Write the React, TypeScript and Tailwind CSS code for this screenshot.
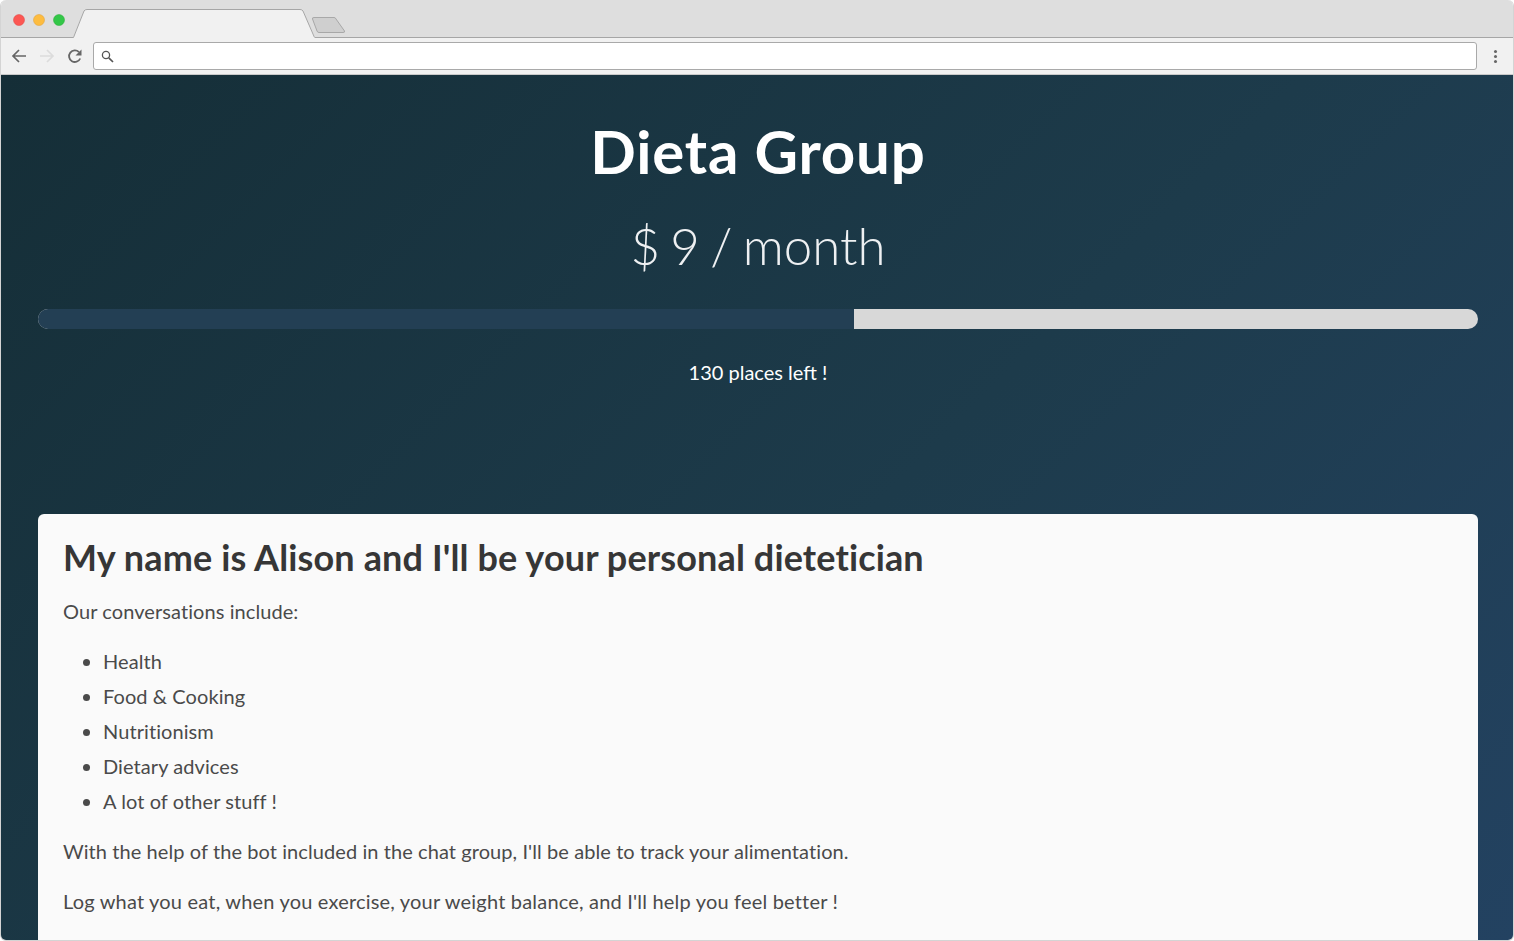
import React from "react";

function TabStrip() {
	return (
		<div className="relative h-[38px] bg-[#dedede]">
			<svg className="absolute left-[-1px] top-0" width="360" height="38" viewBox="0 0 360 38" fill="none">
				<path d="M73 38 L84 11 Q85 9.5 87 9.5 L300 9.5 Q302 9.5 303 11 L315 38 Z" fill="#f1f1f1" />
				<path d="M0 37.5 H73.5 L84 11 Q85 9.5 87 9.5 L300 9.5 Q302 9.5 303 11 L314.5 37.5" stroke="#a6a6a6" />
				<path d="M312.5 19 Q312 17.5 314 17.5 L334 17.5 Q335.5 17.5 336 19 L344.5 31 Q345 32.5 343 32.5 L319 32.5 Q317.5 32.5 317 31 Z" fill="#cfcfcf" stroke="#a8a8a8" />
				<circle cx="19" cy="20" r="5.5" fill="#fc5753" stroke="#df4744" strokeWidth="0.5" />
				<circle cx="39" cy="20" r="5.5" fill="#fdbc40" stroke="#de9f34" strokeWidth="0.5" />
				<circle cx="59" cy="20" r="5.5" fill="#33c748" stroke="#27aa35" strokeWidth="0.5" />
			</svg>
			<div className="ml-[314px] h-[38px] border-b border-[#a6a6a6]" />
		</div>
	);
}

function Toolbar() {
	return (
		<div className="flex h-[37px] items-center border-b border-[#c9c9c9] bg-[#f1f1f1]">
			<div className="flex w-[92px] items-center">
				<svg className="ml-[10px]" width="16" height="16" viewBox="0 0 16 16" fill="none" stroke="#666" strokeWidth="1.7">
					<path d="M15 8H2M8 2 2 8l6 6" />
				</svg>
				<svg className="ml-[12px]" width="16" height="16" viewBox="0 0 16 16" fill="none" stroke="#dcdcdc" strokeWidth="1.7">
					<path d="M1 8h13M8 2l6 6-6 6" />
				</svg>
				<svg className="ml-[12px]" width="16" height="16" viewBox="0 0 16 16" fill="none" stroke="#666" strokeWidth="1.8">
					<path d="M13.2 10.5A5.8 5.8 0 1 1 12 4.1" />
					<path d="M14.5 1.5v6h-6z" fill="#666" stroke="none" />
				</svg>
			</div>
			<div className="flex h-[28px] flex-1 items-center rounded-[3px] border border-[#a9a9a9] bg-white pl-[7px]">
				<svg width="13" height="13" viewBox="0 0 13 13" fill="none" stroke="#555" strokeWidth="1.3">
					<circle cx="5" cy="5" r="3.6" />
					<path d="M7.8 7.8 12 12" strokeWidth="1.7" />
				</svg>
			</div>
			<div className="flex w-[36px] flex-col items-center gap-[2px]">
				<span className="h-[3px] w-[3px] rounded-full bg-[#666]" />
				<span className="h-[3px] w-[3px] rounded-full bg-[#666]" />
				<span className="h-[3px] w-[3px] rounded-full bg-[#666]" />
			</div>
		</div>
	);
}

const topics = ["Health", "Food & Cooking", "Nutritionism", "Dietary advices", "A lot of other stuff !"];

export default function App() {
	return (
		<div className="h-[941px] w-[1514px] overflow-hidden bg-white font-['Lato',sans-serif]">
			<div className="flex h-[941px] flex-col overflow-hidden rounded-[6px] border-x border-b border-[#d4d4d4]">
				<TabStrip />
				<Toolbar />
				<main className="flex-1 overflow-hidden bg-[linear-gradient(135deg,#152e37_0%,#1d3b4b_55%,#234261_100%)] pl-[37px] pr-[35px] pt-[38px]">
					<h1 className="text-center text-[60px] font-bold leading-[76px] tracking-[0.8px] text-white">Dieta Group</h1>
					<p className="mt-[27px] text-center text-[51px] font-light leading-[60px] text-[#eef0f2] [word-spacing:-3.5px]">$ 9 / month</p>
					<div className="mt-[33px] h-[20px] overflow-hidden rounded-[10px] bg-[#d8d8d8]">
						<div className="h-full w-[816px] bg-[#233f54]" />
					</div>
					<p className="mt-[30px] text-center text-[20px] leading-[26px] text-white">130 places left !</p>
					<section className="mt-[129px] h-[500px] rounded-t-[6px] bg-[#fafafa] px-[25px] pt-[19px] text-[#4a4a4a]">
						<h2 className="text-[36px] font-bold leading-[48px] tracking-[0.13px] text-[#363636]">My name is Alison and I'll be your personal dietetician</h2>
						<p className="mt-[15px] text-[20px] leading-[30px] tracking-[0.08px]">Our conversations include:</p>
						<ul className="mt-[18px] list-disc pl-[40px] text-[20px] leading-[35px] tracking-[0.08px]">
							{topics.map((topic) => (
								<li key={topic}>{topic}</li>
							))}
						</ul>
						<p className="mt-[17px] text-[20px] leading-[30px] tracking-[0.08px]">With the help of the bot included in the chat group, I'll be able to track your alimentation.</p>
						<p className="mt-[20px] text-[20px] leading-[30px] tracking-[0.19px]">Log what you eat, when you exercise, your weight balance, and I'll help you feel better !</p>
					</section>
				</main>
			</div>
		</div>
	);
}
